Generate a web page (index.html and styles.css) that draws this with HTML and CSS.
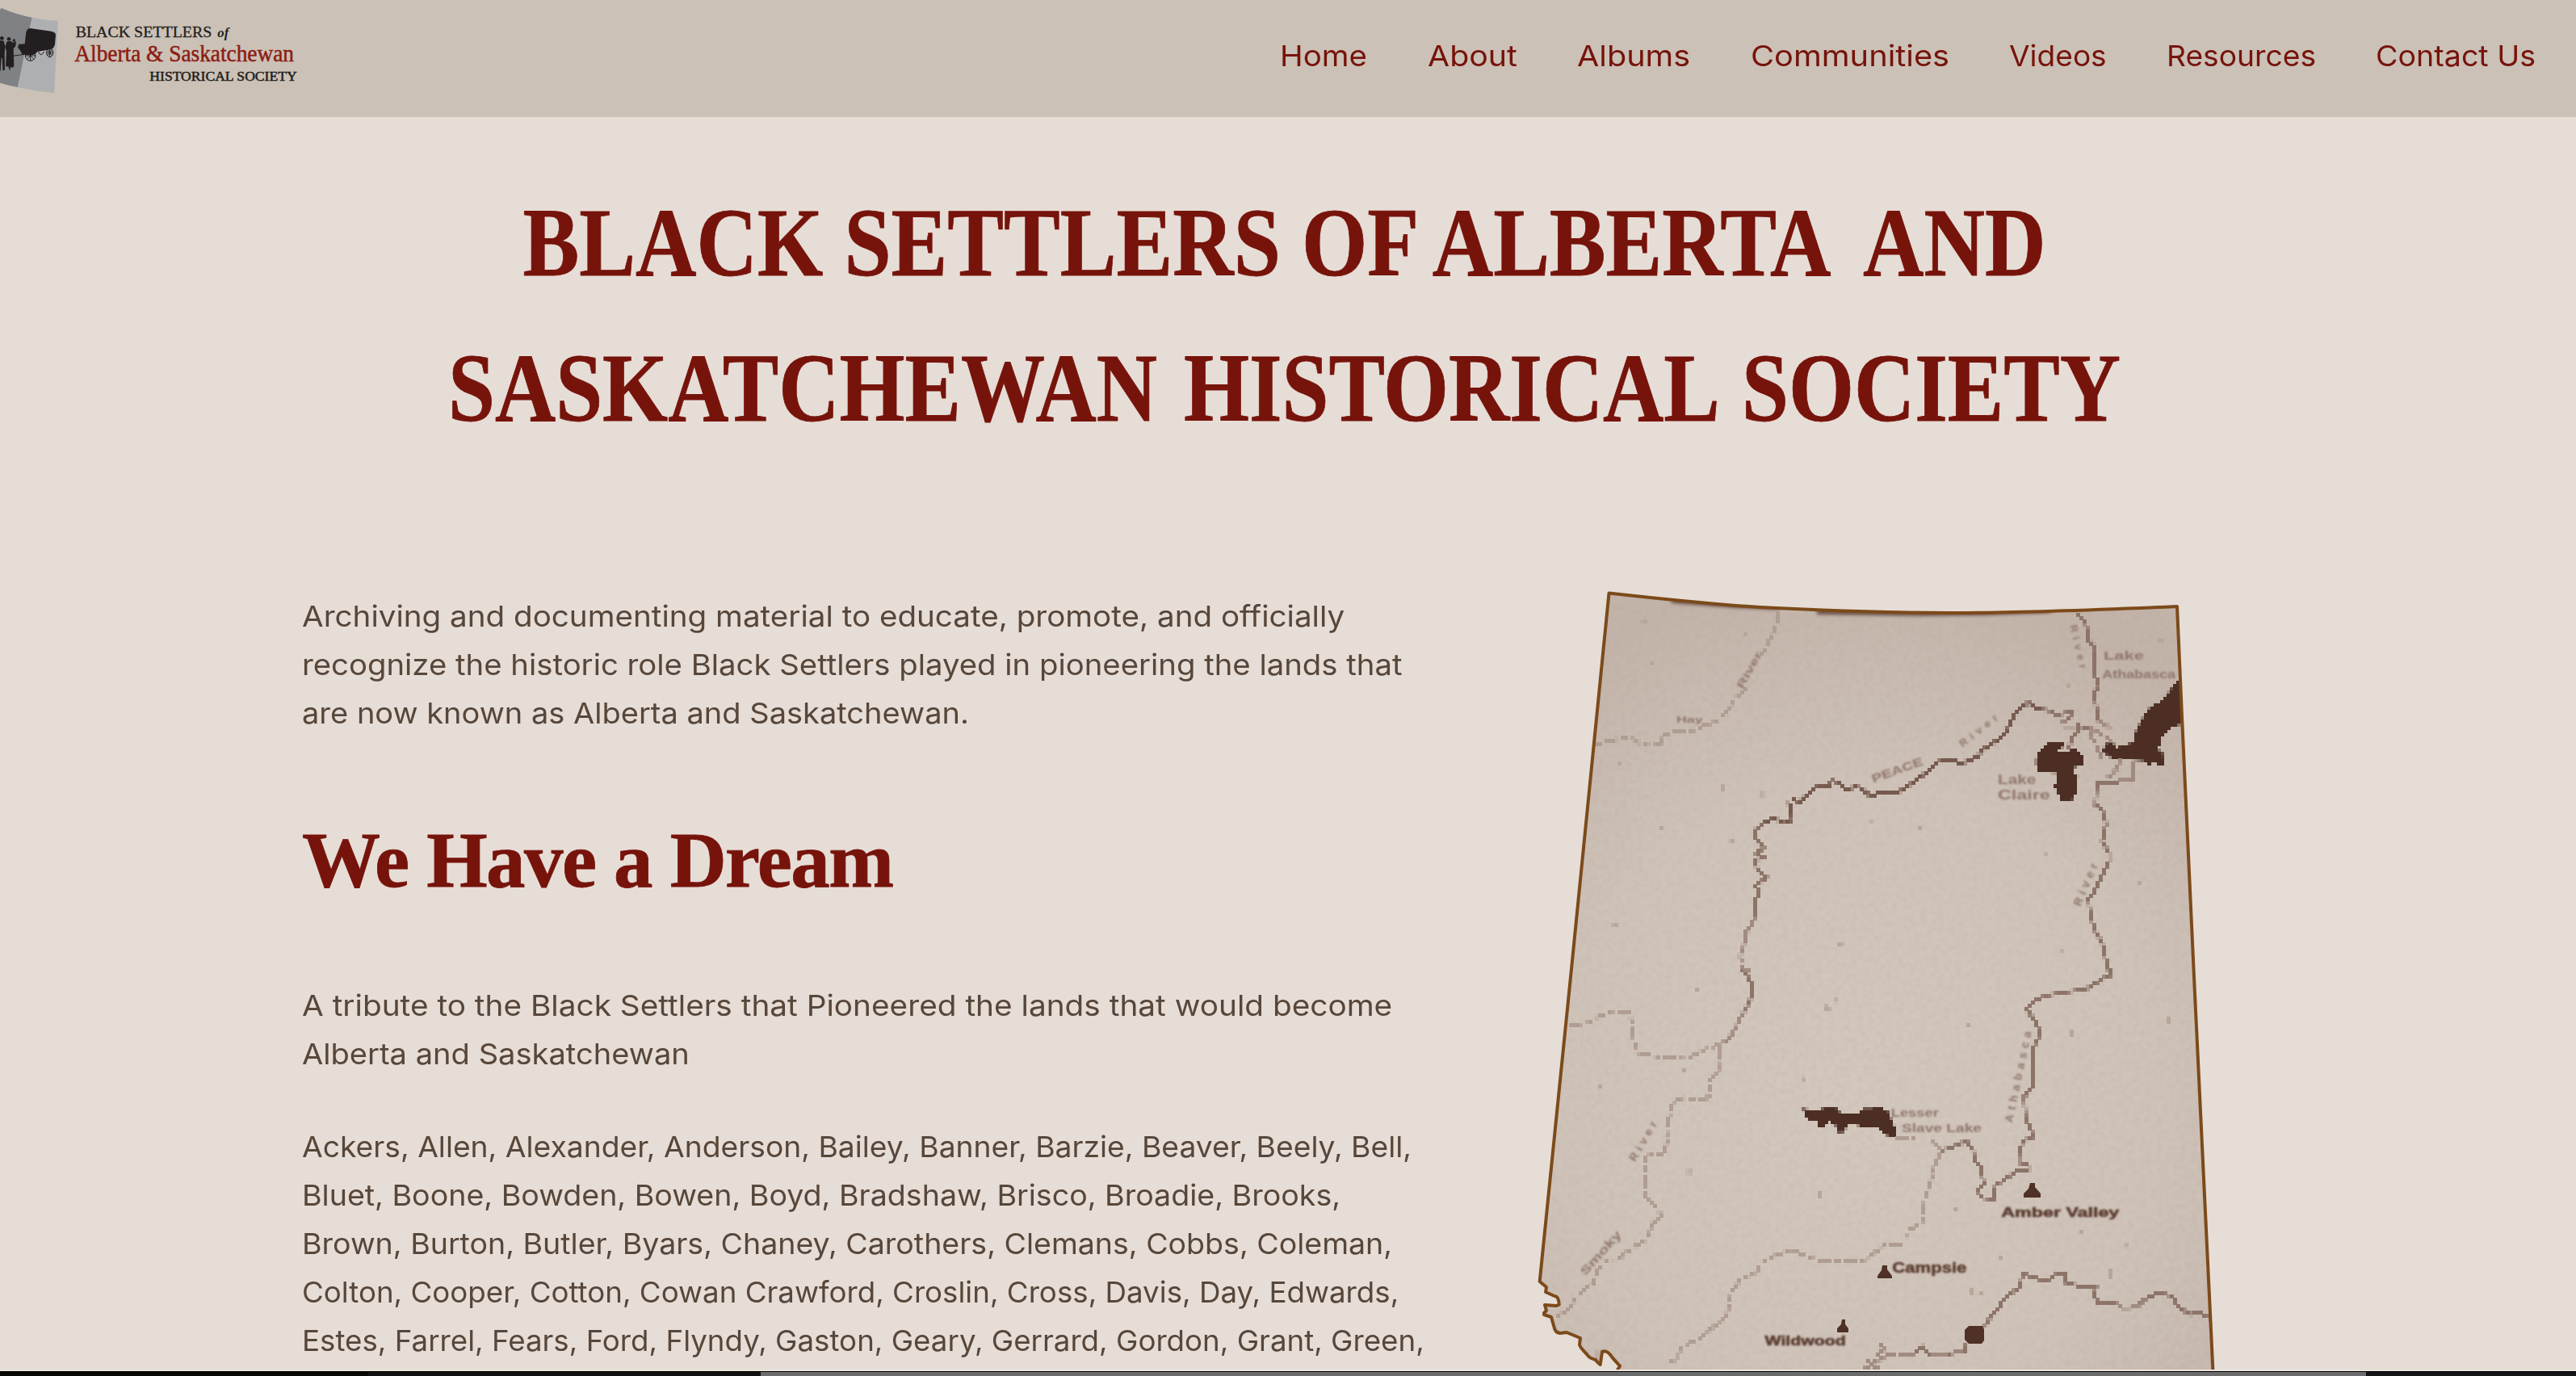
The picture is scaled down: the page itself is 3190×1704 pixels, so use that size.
FILE: index.html
```html
<!DOCTYPE html>
<html lang="en">
<head>
<meta charset="utf-8">
<title>Black Settlers of Alberta and Saskatchewan Historical Society</title>
<link rel="stylesheet" href="styles.css">
</head>
<body>
<div class="page">
  <header class="site-header">
    <svg class="logo" width="400" height="145" viewBox="0 0 1200 435" role="img" aria-label="Black Settlers of Alberta and Saskatchewan Historical Society">
      <path fill="#808184" d="M0 36L5 30Q60 54 119 65L66 324Q30 317 0 308Z"/>
      <path fill="#adafb3" d="M119 65Q168 76 216 77L201 345Q130 339 66 324Z"/>
      <g fill="#231f20">
        <path d="M97 120Q99 106 112 105L190 116Q207 119 207 130L204 165Q200 180 190 183L138 192Q130 206 112 205Q95 204 92 203L48 209L48 206L82 202Q76 186 66 176L70 164L92 163Z"/>
        <circle cx="7" cy="142" r="7"/><circle cx="33" cy="145" r="7"/><circle cx="52" cy="150" r="5"/>
        <path d="M0 150L14 152L19 172L17 200L18 260L10 262L8 215L5 215L2 264L0 264Z"/>
        <path d="M26 154L42 153L47 158L60 154L58 172L50 180L52 245L46 252L40 248L36 264L32 248L21 246L24 190L19 175Z"/>
      </g>
      <g fill="none" stroke="#231f20" stroke-width="3">
        <circle cx="113" cy="207" r="19"/><path d="M113 188V226M94 207H132M100 194L126 220M126 194L100 220"/>
        <ellipse cx="185" cy="195" rx="12" ry="17"/><path d="M185 178V212M173 195H197M177 184L193 206M193 184L177 206"/>
        <path d="M142 192Q152 214 164 192"/>
      </g>
      <g class="logo-text">
        <text x="281" y="139" font-size="58" textLength="506" lengthAdjust="spacingAndGlyphs" stroke="#231f20" stroke-width="1">BLACK SETTLERS</text>
        <text x="808" y="139" font-size="50" font-style="italic" font-weight="700" textLength="42" lengthAdjust="spacingAndGlyphs">of</text>
        <text class="logo-red" x="277" y="229" font-size="86" textLength="815" lengthAdjust="spacingAndGlyphs">Alberta &amp; Saskatchewan</text>
        <text x="556" y="301" font-size="49" textLength="547" lengthAdjust="spacingAndGlyphs" stroke="#231f20" stroke-width="1.6">HISTORICAL SOCIETY</text>
      </g>
    </svg>
    <nav class="site-nav">
      <a class="nav-home">Home</a>
      <a class="nav-about">About</a>
      <a class="nav-albums">Albums</a>
      <a class="nav-communities">Communities</a>
      <a class="nav-videos">Videos</a>
      <a class="nav-resources">Resources</a>
      <a class="nav-contact">Contact Us</a>
    </nav>
  </header>

  <main>
    <h1 class="title"><span class="title-a">BLACK SETTLERS OF ALBERTA <b>AND</b></span><span class="title-b">SASKATCHEWAN HISTORICAL SOCIETY</span></h1>
    <div class="columns">
      <div class="copy">
        <p class="intro">
          <span class="w-1072">Archiving and documenting material to educate, promote, and officially</span>
          <span class="w-1064">recognize the historic role Black Settlers played in pioneering the lands that</span>
          <span class="w-1056">are now known as Alberta and Saskatchewan.</span>
        </p>
        <h2>We Have a Dream</h2>
        <p class="tribute">
          <span class="w-1077">A tribute to the Black Settlers that Pioneered the lands that would become</span>
          <span class="w-1058">Alberta and Saskatchewan</span>
        </p>
        <p class="names">
          <span class="w-1035">Ackers, Allen, Alexander, Anderson, Bailey, Banner, Barzie, Beaver, Beely, Bell,</span>
          <span class="w-1044">Bluet, Boone, Bowden, Bowen, Boyd, Bradshaw, Brisco, Broadie, Brooks,</span>
          <span class="w-1043">Brown, Burton, Butler, Byars, Chaney, Carothers, Clemans, Cobbs, Coleman,</span>
          <span class="w-1020">Colton, Cooper, Cotton, Cowan Crawford, Croslin, Cross, Davis, Day, Edwards,</span>
          <span class="w-1020">Estes, Farrel, Fears, Ford, Flyndy, Gaston, Geary, Gerrard, Gordon, Grant, Green,</span>
        </p>
      </div>
      <svg class="map" width="860" height="978" viewBox="0 0 860 978" role="img" aria-label="Map of Alberta settlements">
        <defs>
          <path id="province" d="M92.500 14.500C160 22 250 31 300 33C400 38 480 39.500 553 38.700C620 38 700 35 796 31L802 167L817 490L841 990L95 990L102 978L106 971.700L97 961.700Q92 954 88 953.500Q84 953 84 954L81.700 970Q77 966 76 964Q68 962 65 957Q56 948 56 945L57 937L40 930L32 931Q26 930 25 925L21 911L12 908V906L15 903L13 896L27 897Q31 896 30.700 895Q30 885 25 885L14 880L15 874L6.700 867L46 480Z"/>
          <clipPath id="clip"><use href="#province"/></clipPath>
          <radialGradient id="paper" gradientUnits="userSpaceOnUse" cx="400" cy="640" r="640">
            <stop offset="0" stop-color="#d3c8be"/><stop offset=".6" stop-color="#cfc3b9"/><stop offset="1" stop-color="#c3b4aa"/>
          </radialGradient>
          <filter id="grain" x="0" y="0" width="100%" height="100%">
            <feTurbulence type="fractalNoise" baseFrequency=".14" numOctaves="2" seed="4"/>
            <feColorMatrix values="0 0 0 0 .4  0 0 0 0 .28  0 0 0 0 .24  .5 0 0 0 -.18"/>
          </filter>
          <filter id="pixels" filterUnits="userSpaceOnUse" x="0" y="0" width="860" height="980" color-interpolation-filters="sRGB">
            <feFlood x="1" y="1" width="1" height="1" flood-color="#000" result="dot"/>
            <feOffset in="dot" x="0" y="0" width="4" height="4" dx="0" dy="0"/>
            <feTile x="0" y="0" width="860" height="980" result="grid"/>
            <feComposite in="SourceGraphic" in2="grid" operator="in"/>
            <feMorphology operator="dilate" radius="2"/>
            <feGaussianBlur stdDeviation=".6"/>
          </filter>
        </defs>
        <g clip-path="url(#clip)">
          <rect width="860" height="978" fill="url(#paper)"/>
          <rect width="860" height="978" filter="url(#grain)" opacity=".5"/>
          <path class="top-shade" d="M170 24L250 30L300 32M350 38L480 40L560 39L640 36"/>
          <g class="ink" filter="url(#pixels)">
            <g transform="scale(.3333)">
              <path class="river faint" d="M910 105L898 165L885 200L860 245L835 290M790 400L750 430L715 485L680 520L630 535L590 553L530 555L480 570L472 600L440 612L400 605L360 583L330 577L295 590L240 602L220 615"/>
              <path class="river strong" d="M1330 785L1285 785L1250 798L1215 768L1190 762L1165 775L1125 745L1105 740L1095 762L1045 765L1000 805L985 820L960 808M930 822L955 832L957 885L935 900L890 880L850 900"/>
              <path class="river mid" d="M850 900L825 920L820 950L835 970L852 990L825 1010L850 1025L820 1035L830 1075L865 1100L820 1130L840 1150L818 1190L820 1245"/>
              <path class="river soft" d="M820 1245L795 1300L780 1300L785 1330L765 1390L775 1445L795 1445L785 1470"/>
              <path class="speck" d="M400 150h14M438 300v12M778 200h10M700 758v20M850 782v20M470 912h10M725 968h14M1243 888h10M292 1281h20M1125 1348h20M310 680h8"/>
            </g>
            <g transform="translate(420) scale(.3333)">
              <path class="river strong" d="M0 795L30 785H90L150 745L210 700L240 670L300 660L320 680L390 650L400 630L460 590L495 560L515 510L540 475L575 450L610 475L660 480"/>
              <path class="river mid" d="M660 480L680 495L735 485L730 510L700 520M705 550H760L760 530M800 545L770 550L740 580L725 620M760 120L790 160L800 220L825 245L820 340L838 390L820 410L828 470L838 520"/>
              <path class="river soft" d="M838 520L880 545M800 545L820 600L850 655M800 540L870 580L880 600M960 670L970 740H910M920 660L900 700L870 730"/>
              <path class="river mid" d="M910 748L830 752L825 830L850 850L865 900L850 965L875 1010L875 1040L840 1110L820 1155L800 1180L805 1230L820 1290L850 1345L865 1410L880 1470"/>
              <path class="water" d="M1150 375L1130 375L1060 455L1030 465L1000 510L975 560L965 600L900 620L890 600L860 605L855 630L890 660L1010 665L1020 680L1050 670L1055 685H1075L1073 630L1055 628L1070 580L1110 540L1155 525Z"/>
              <path class="water" d="M650 600L700 597L715 610L680 625L690 635L720 640L745 620L770 640L783 665L775 685L740 690L740 710L760 720L750 790L735 812H695L683 770L665 765L685 745L680 712L620 710L605 685L605 655L625 625Z"/>
              <path class="speck" d="M1055 222h20M715 392h12M165 920h10M985 1120h14M700 1370h8M640 1016h8"/>
            </g>
            <g transform="translate(-10 480) scale(.3333)">
              <path class="river mid" d="M805 0L835 50L838 100L815 150"/>
              <path class="river soft" d="M815 150L785 200L770 235L735 275"/>
              <path class="river faint" d="M735 268L690 290L650 305L600 335L490 325L420 312L400 270L397 230L385 165L330 153L260 180L235 200L145 212M720 290V370L705 385L685 410V465L660 488L580 478L545 495L535 540L520 590L525 640L510 685L445 695L440 790L445 850L485 885L503 915L470 945L445 1005L420 1020L370 1055L345 1078L300 1080L265 1115L250 1165L195 1210L150 1270L110 1290M1400 1025L1330 1025L1300 1050L1260 1080L1180 1088H1110L1040 1070L990 1042L930 1062L880 1088L855 1125L790 1160L760 1210L745 1295L695 1330L650 1370L580 1400L555 1450L530 1460"/>
              <path class="water" d="M1025 520L1080 525L1110 518H1150L1170 540L1235 535L1250 520H1310L1340 525L1370 590V618H1345L1310 585L1240 582L1205 570L1175 605H1155L1150 578L1125 565L1100 585H1085L1080 562H1050Z"/>
              <path class="speck" d="M264 441h12M625 80h16M1110 140L1125 152M1145 118h10M1095 830v22M1028 407h12M605 745v16M580 372h10M268 1420v40"/>
            </g>
            <g transform="translate(420 480) scale(.3333)">
              <path class="river mid" d="M880 0V20L845 40L790 75L720 85L650 97L600 115L568 150L600 190L620 240L590 300V440L560 475L565 550L590 610V625L555 640L540 690V718L575 730V752H530L480 788L455 800L445 855L400 850L388 820L410 800L400 740L375 710L370 670L345 638L310 655L255 675"/>
              <path class="river faint" d="M255 675L215 640M80 628H150M250 680L225 735L210 805L190 850L185 935L120 980V1000"/>
              <path class="river mid" d="M1260 1300L1245 1295L1200 1272L1175 1285L1130 1250L1110 1215L1060 1203L1010 1225L985 1250M905 1240H835L820 1215L828 1180H770L715 1165L710 1135H680L640 1160L555 1132L545 1180L485 1225L465 1260L430 1300L415 1330M345 1390L342 1425H300L270 1435M210 1435L180 1400L150 1435"/>
              <path class="river soft" d="M985 1250L950 1260L920 1260L905 1240M270 1435H210M150 1435H50M25 1395L40 1415L15 1430L40 1450L-20 1455L10 1480L-35 1485"/>
              <path class="water" d="M0 518H30L60 565L82 600V618H55L10 585L-20 582V535Z"/>
              <path class="speck" d="M1100 182v20M882 1115v35M733 230v20M300 892h14M350 210h12M365 1190v20M400 1198v12M768 972h10M935 1030h10M464 1076h10"/>
            </g>
          </g>
          <g class="markers">
            <path d="M381 914H385V920L389 925V930H375V925L380 920Z"/>
            <path d="M614 745H620V750L627 758V763H606V758L612 752Z"/>
            <path d="M431 847H437V852L443 860V863H425V860L430 853Z"/>
            <path d="M538 922H555L557 926V940L554 944H538L533 939V927Z"/>
          </g>
          <g class="labels">
            <g transform="scale(.3333)">
              <text x="528" y="526" font-size="34" textLength="98" lengthAdjust="spacingAndGlyphs">Hay</text>
              <text transform="translate(775 402) rotate(-61)" font-size="38" textLength="150" lengthAdjust="spacingAndGlyphs">River</text>
            </g>
            <g transform="translate(420) scale(.3333)">
              <text transform="translate(0 750) rotate(-20)" font-size="42" textLength="200" lengthAdjust="spacingAndGlyphs">PEACE</text>
              <text transform="translate(332 618) rotate(-38)" font-size="40" textLength="170">River</text>
              <text transform="translate(730 165) rotate(77)" font-size="38" textLength="165">River</text>
              <text transform="translate(770 1210) rotate(-67)" font-size="42" textLength="168">River</text>
              <text x="855" y="292" font-size="44" textLength="150" lengthAdjust="spacingAndGlyphs">Lake</text>
              <text x="850" y="361" font-size="44" textLength="272" lengthAdjust="spacingAndGlyphs">Athabasca</text>
              <text x="462" y="752" font-size="48" textLength="142" lengthAdjust="spacingAndGlyphs">Lake</text>
              <text x="462" y="811" font-size="52" textLength="194" lengthAdjust="spacingAndGlyphs">Claire</text>
            </g>
            <g transform="translate(-10 480) scale(.3333)">
              <text transform="translate(220 1142) rotate(-48)" font-size="42" textLength="205" lengthAdjust="spacingAndGlyphs">Smoky</text>
              <text transform="translate(405 718) rotate(-60)" font-size="42" textLength="165">River</text>
              <text class="town" x="887" y="1397" font-size="48" textLength="300" lengthAdjust="spacingAndGlyphs">Wildwood</text>
            </g>
            <g transform="translate(420 480) scale(.3333)">
              <text transform="translate(515 572) rotate(-78)" font-size="42" textLength="345">Athabasca</text>
              <text x="65" y="550" font-size="42" textLength="178" lengthAdjust="spacingAndGlyphs">Lesser</text>
              <text x="105" y="607" font-size="46" textLength="297" lengthAdjust="spacingAndGlyphs">Slave Lake</text>
              <text class="town" x="475" y="921" font-size="48" textLength="438" lengthAdjust="spacingAndGlyphs">Amber Valley</text>
              <text class="town" x="70" y="1127" font-size="56" textLength="276" lengthAdjust="spacingAndGlyphs">Campsie</text>
            </g>
          </g>
        </g>
        <use href="#province" class="border"/>
      </svg>
    </div>
  </main>
</div>
<div class="strip"><i></i><i></i><i></i><i></i></div>
</body>
</html>
```
FILE: styles.css
```css
* { box-sizing: border-box; }
body {
  margin: 0;
  height: 1704px;
  overflow: hidden;
  background: #e6ddd6;
  font-family: Inter, "Liberation Sans", sans-serif;
}
.page { height: 1698px; overflow: hidden; border-bottom: 2px solid #ebe5df; }
.site-header {
  display: flex;
  justify-content: space-between;
  height: 145px;
  background: #cbc1b6;
}
.logo { display: block; }
.logo-text { font-family: "Liberation Serif", serif; fill: #231f20; }
.logo-red { fill: #8c1c13; stroke: #8c1c13; stroke-width: 1.5; }
.site-nav {
  display: flex;
  gap: 74px;
  padding: 39px 50px 0 0;
  color: #76130b;
  font-size: 36px;
  line-height: 60px;
}
.site-nav a { white-space: nowrap; transform-origin: 0 0; }
.nav-home { width: 109px; transform: scaleX(1.07); }
.nav-about { width: 111px; transform: scaleX(1.093); }
.nav-albums { width: 141px; transform: scaleX(1.1); }
.nav-communities { width: 246px; transform: scaleX(1.105); }
.nav-videos { width: 121px; transform: scaleX(1.03); }
.nav-resources { width: 185px; transform: scaleX(1.034); }
.nav-contact { width: 198px; transform: scaleX(1.045); }
h1, h2, p { margin: 0; }
.title {
  padding: 65px 9px 0 0;
  color: #76130b;
  font: 700 121px/180px "Liberation Serif", serif;
  text-align: center;
  -webkit-text-stroke: .8px #76130b;
}
.title span { display: block; white-space: nowrap; }
.title b { margin-left: 22px; }
.title-a { transform: scaleX(.864); }
.title-b { word-spacing: 8px; transform: scaleX(.861); }
.columns {
  display: grid;
  grid-template-columns: 1526px 860px;
  margin: 150px 0 0 374px;
}
.copy { padding-top: 13px; color: #57473a; font-size: 36px; line-height: 60px; }
.copy span { display: block; white-space: nowrap; transform-origin: 0 0; }
.copy h2 {
  margin: 80px 0 76px;
  color: #76130b;
  font: 700 97px/146px "Liberation Serif", serif;
  letter-spacing: -1.58px;
  -webkit-text-stroke: .8px #76130b;
}
.names { padding-top: 55px; }
.w-1072 { transform: scaleX(1.072); }
.w-1064 { transform: scaleX(1.064); }
.w-1056 { transform: scaleX(1.056); }
.w-1077 { transform: scaleX(1.077); }
.w-1058 { transform: scaleX(1.058); }
.w-1035 { transform: scaleX(1.0345); }
.w-1044 { transform: scaleX(1.044); }
.w-1043 { transform: scaleX(1.0425); }
.w-1020 { transform: scaleX(1.0197); }
.map { display: block; }
.border { fill: none; stroke: #7c4a1a; stroke-width: 4; stroke-linejoin: round; }
.river { fill: none; stroke-width: 10; }
.strong { stroke: #765a4e; }
.mid { stroke: #8d7468; }
.soft { stroke: #a18b80; stroke-dasharray: 60 9; }
.faint { stroke: #b09d92; stroke-dasharray: 50 12 24 10; }
.speck { fill: none; stroke: #b8a69b; stroke-width: 12; }
.water { fill: #4c2e24; }
.markers { fill: #4f3127; }
.top-shade { fill: none; stroke: #5b4038; stroke-width: 5; filter: blur(2px); }
.labels {
  font-family: "Liberation Sans", sans-serif;
  font-weight: 700;
  fill: #8f766a;
  filter: blur(.8px);
}
.town { fill: #5e4035; stroke: #5e4035; stroke-width: 2; }
.strip {
  display: grid;
  grid-template-columns: 456px 486px 1988px 1fr;
  height: 6px;
  border-top: 1px solid #000;
}
.strip i:nth-child(1) { background: #080806; }
.strip i:nth-child(2) { background: #111; }
.strip i:nth-child(3) { background: #6c6c6c; }
.strip i:nth-child(4) { background: #141418; }
```
